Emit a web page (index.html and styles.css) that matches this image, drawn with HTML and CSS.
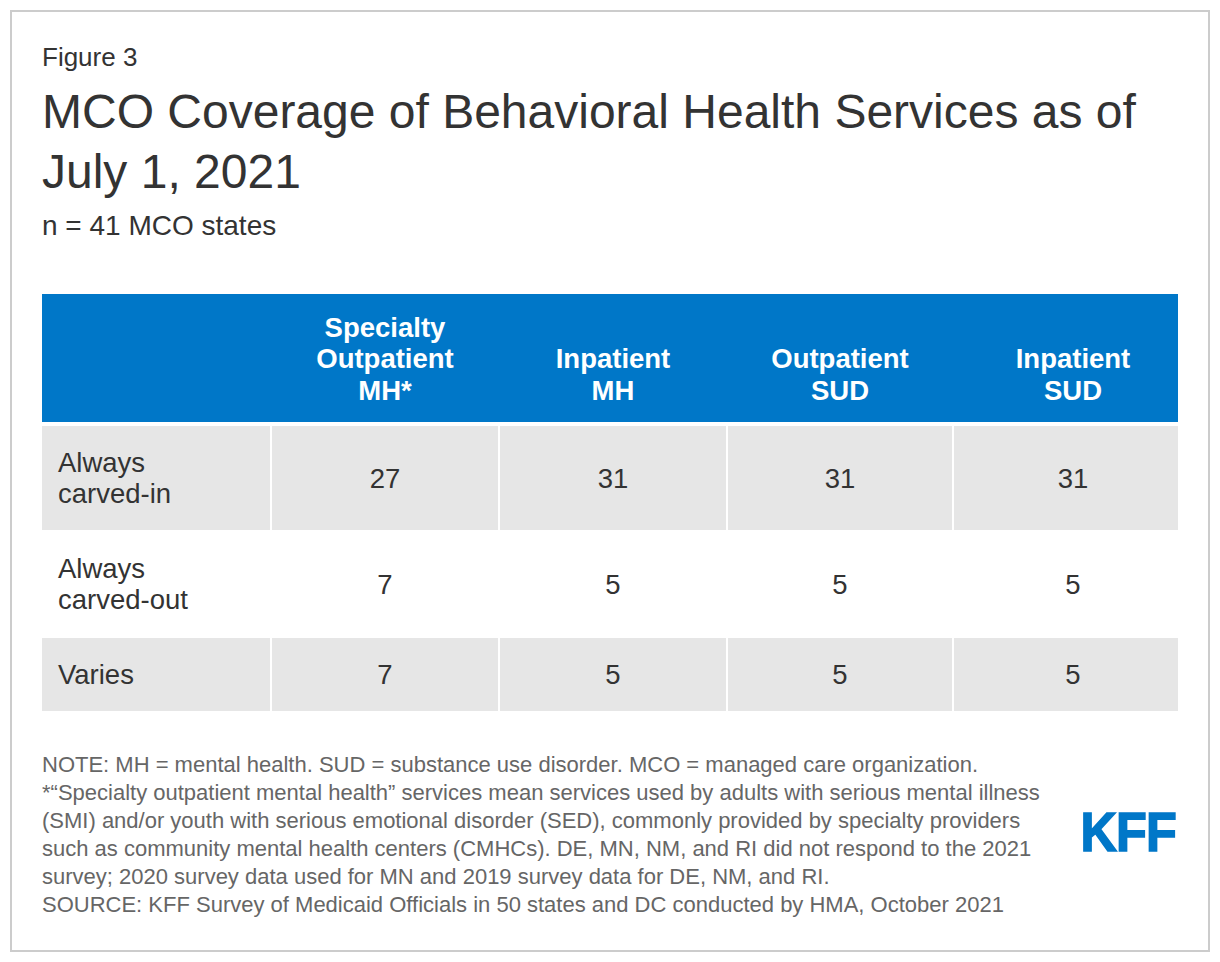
FILE: index.html
```html
<!DOCTYPE html>
<html lang="en">
<head>
<meta charset="utf-8">
<title>MCO Coverage of Behavioral Health Services</title>
<link rel="stylesheet" href="styles.css">
</head>
<body>
<div class="figure">
  <div class="fig-label">Figure 3</div>
  <h1 class="title">MCO Coverage of Behavioral Health Services as of July 1, 2021</h1>
  <div class="subtitle">n = 41 MCO states</div>

  <div class="table">
    <div class="thead">
      <div class="th"></div>
      <div class="th">Specialty<br>Outpatient<br>MH*</div>
      <div class="th">Inpatient<br>MH</div>
      <div class="th">Outpatient<br>SUD</div>
      <div class="th last">Inpatient<br>SUD</div>
    </div>
    <div class="tbody">
      <div class="tr shaded">
        <div class="td label">Always<br>carved-in</div>
        <div class="td num">27</div>
        <div class="td num">31</div>
        <div class="td num">31</div>
        <div class="td num last">31</div>
      </div>
      <div class="tr">
        <div class="td label">Always<br>carved-out</div>
        <div class="td num">7</div>
        <div class="td num">5</div>
        <div class="td num">5</div>
        <div class="td num last">5</div>
      </div>
      <div class="tr shaded">
        <div class="td label">Varies</div>
        <div class="td num">7</div>
        <div class="td num">5</div>
        <div class="td num">5</div>
        <div class="td num last">5</div>
      </div>
    </div>
  </div>

  <div class="footer">
    <div class="notes">
      <p>NOTE: MH = mental health. SUD = substance use disorder. MCO = managed care organization.</p>
      <p>*“Specialty outpatient mental health” services mean services used by adults with serious mental illness<br>(SMI) and/or youth with serious emotional disorder (SED), commonly provided by specialty providers<br>such as community mental health centers (CMHCs). DE, MN, NM, and RI did not respond to the 2021<br>survey; 2020 survey data used for MN and 2019 survey data for DE, NM, and RI.</p>
      <p>SOURCE: KFF Survey of Medicaid Officials in 50 states and DC conducted by HMA, October 2021</p>
    </div>
    <div class="logo">KFF</div>
  </div>
</div>
</body>
</html>
```

FILE: styles.css
```css
* {
  box-sizing: border-box;
}

html, body {
  margin: 0;
  padding: 0;
  background: #ffffff;
}

body {
  font-family: "Liberation Sans", Arial, Helvetica, sans-serif;
  color: #333333;
}

.figure {
  margin: 10px;
  width: 1200px;
  border: 2px solid #cccccc;
  padding: 30px 30px 31px 30px;
}

.fig-label {
  font-size: 26px;
  line-height: 30px;
  color: #333333;
}

.title {
  margin: 10px 0 0 0;
  font-size: 48px;
  font-weight: normal;
  line-height: 60px;
  color: #333333;
}

.subtitle {
  margin-top: 8px;
  font-size: 28px;
  line-height: 32px;
  color: #333333;
}

.table {
  margin-top: 52px;
}

.thead,
.tr {
  display: grid;
  grid-template-columns: 228px 226px 226px 224px 224px;
  column-gap: 2px;
}

.thead {
  background: #0077c8;
  min-height: 128px;
  margin-bottom: 4px;
}

.th {
  display: flex;
  align-items: flex-end;
  justify-content: center;
  text-align: center;
  padding: 16px 4px 16px 4px;
  font-size: 27.5px;
  font-weight: bold;
  line-height: 31.5px;
  color: #ffffff;
}

.tbody {
  display: flex;
  flex-direction: column;
  gap: 2px;
}

.td {
  display: flex;
  align-items: center;
  padding: 21px 16px;
  font-size: 27.5px;
  line-height: 31px;
  color: #333333;
}

.tr.shaded .td {
  background: #e6e6e6;
}

.td.num {
  justify-content: center;
}

.th.last,
.td.last {
  padding-left: 18px;
  padding-right: 4px;
}

.footer {
  margin-top: 40px;
  display: flex;
  align-items: center;
  justify-content: space-between;
}

.notes {
  width: 1030px;
  font-size: 22px;
  line-height: 28px;
  color: #666666;
}

.notes p {
  margin: 0;
}

.logo {
  font-size: 56px;
  font-weight: bold;
  line-height: 56px;
  letter-spacing: -1px;
  color: #0077c8;
  -webkit-text-stroke: 1.6px #0077c8;
  transform: translateY(-3px) scaleX(0.9);
  transform-origin: right center;
  margin-right: 2px;
}
```
